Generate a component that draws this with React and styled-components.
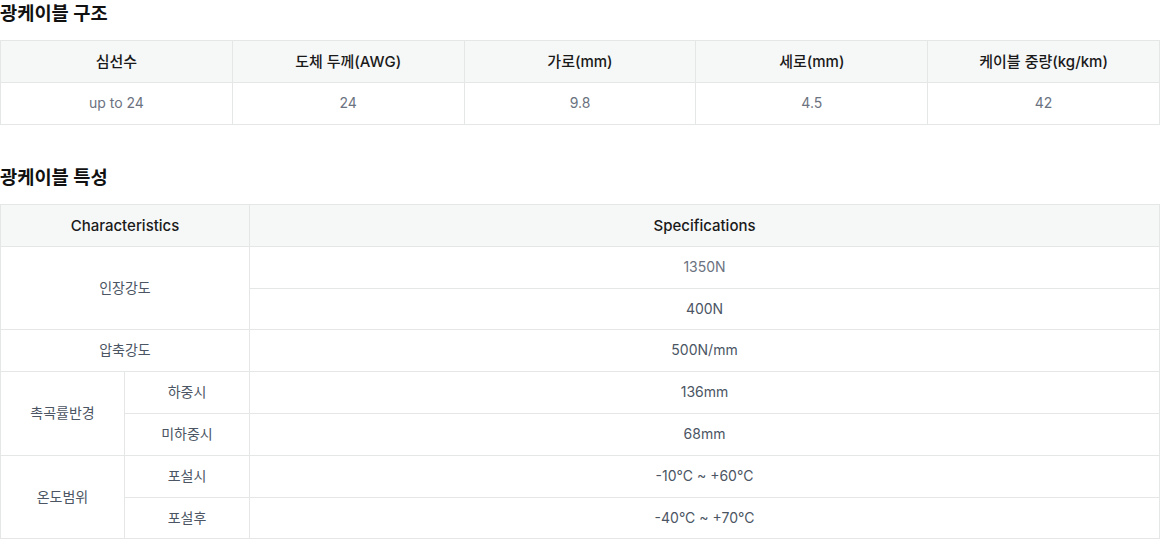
import React from "react";
import styled, { createGlobalStyle } from "styled-components";

const GlobalStyle = createGlobalStyle`
  body {
    margin: 0;
    background: #fff;
    font-family: Inter, "Noto Sans CJK KR", sans-serif;
    color: #374151;
  }
`;

const Page = styled.div`
  width: 1160px;
`;

const Section = styled.section`
  & + & {
    margin-top: 39px;
  }
`;

const Title = styled.h3`
  margin: 0 0 12px;
  font-size: 18.7px;
  line-height: 28px;
  font-weight: 700;
  color: #111;
`;

const Table = styled.table`
  width: 100%;
  table-layout: fixed;
  border-collapse: collapse;
  font-size: 14px;
`;

const Th = styled.th`
  background: #f6f7f7;
  border: 1px solid #e5e7e7;
  padding: 10px 12px;
  line-height: 21px;
  font-size: 15px;
  font-weight: 500;
  color: #1a1a1a;
  text-align: center;
`;

const Td = styled.td`
  border: 1px solid #e5e7e7;
  padding: 10px 12px;
  line-height: 20.8px;
  text-align: center;
  color: ${(p) => (p.$muted ? "#6b7280" : "#4b5563")};
`;

const structHead = ["심선수", "도체 두께(AWG)", "가로(mm)", "세로(mm)", "케이블 중량(kg/km)"];
const structRow = ["up to 24", "24", "9.8", "4.5", "42"];

const App = () => {
  return (
    <Page>
      <GlobalStyle />
      <Section>
        <Title>광케이블 구조</Title>
        <Table>
          <thead>
            <tr>
              {structHead.map((h) => (
                <Th key={h}>{h}</Th>
              ))}
            </tr>
          </thead>
          <tbody>
            <tr>
              {structRow.map((v, i) => (
                <Td key={i} $muted>
                  {v}
                </Td>
              ))}
            </tr>
          </tbody>
        </Table>
      </Section>
      <Section>
        <Title>광케이블 특성</Title>
        <Table>
          <colgroup>
            <col style={{ width: 124 }} />
            <col style={{ width: 125 }} />
            <col />
          </colgroup>
          <thead>
            <tr>
              <Th colSpan={2}>Characteristics</Th>
              <Th>Specifications</Th>
            </tr>
          </thead>
          <tbody>
            <tr>
              <Td colSpan={2} rowSpan={2}>인장강도</Td>
              <Td $muted>1350N</Td>
            </tr>
            <tr>
              <Td>400N</Td>
            </tr>
            <tr>
              <Td colSpan={2}>압축강도</Td>
              <Td>500N/mm</Td>
            </tr>
            <tr>
              <Td rowSpan={2}>촉곡률반경</Td>
              <Td>하중시</Td>
              <Td>136mm</Td>
            </tr>
            <tr>
              <Td>미하중시</Td>
              <Td>68mm</Td>
            </tr>
            <tr>
              <Td rowSpan={2}>온도범위</Td>
              <Td>포설시</Td>
              <Td>-10°C ~ +60°C</Td>
            </tr>
            <tr>
              <Td>포설후</Td>
              <Td>-40°C ~ +70°C</Td>
            </tr>
          </tbody>
        </Table>
      </Section>
    </Page>
  );
};

export default App;
